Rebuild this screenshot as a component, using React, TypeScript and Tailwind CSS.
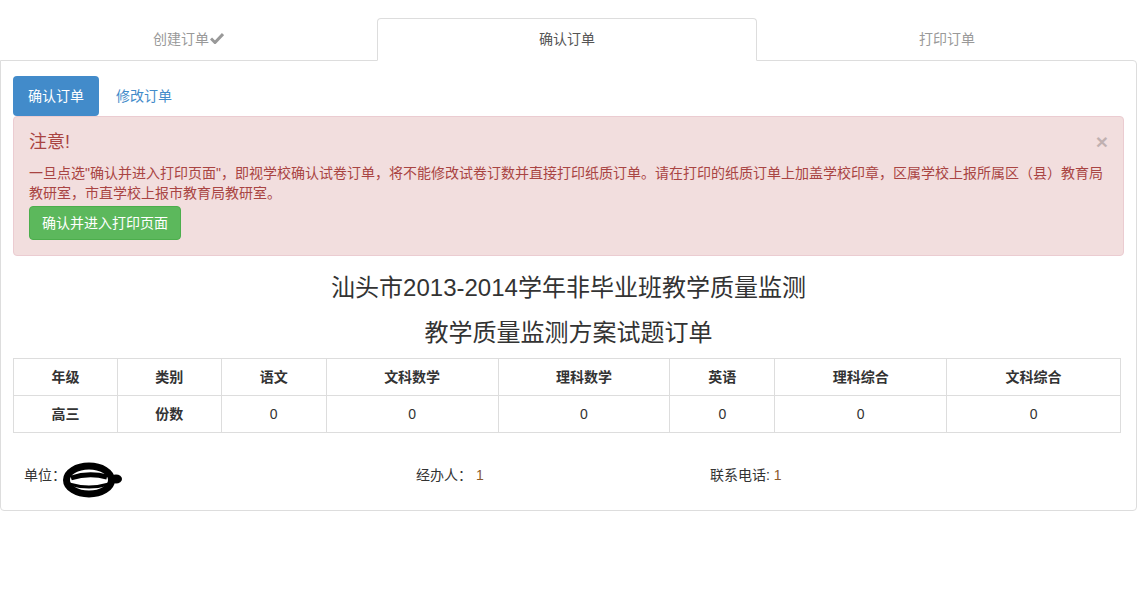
import React from 'react';

const font = '"Liberation Sans", "Noto Sans CJK SC", sans-serif';

const headers = ['年级', '类别', '语文', '文科数学', '理科数学', '英语', '理科综合', '文科综合'];
const widths = [104, 104, 105, 172, 172, 105, 172, 174];

const Check = () => (
  <svg width="14" height="12" viewBox="0 0 14 12" className="inline-block ml-[1px] -mt-[3px]">
    <path d="M1 6.5 L5 10.5 L13 2" fill="none" stroke="#999" strokeWidth="3" />
  </svg>
);

const Scribble = () => (
  <svg width="60" height="36" viewBox="0 0 60 36">
    <ellipse cx="26" cy="18" rx="22.5" ry="14" fill="none" stroke="#000" strokeWidth="7" />
    <path d="M8 16 Q26 10 44 15" fill="none" stroke="#000" strokeWidth="5" />
    <path d="M6 22 Q26 28 46 22" fill="none" stroke="#000" strokeWidth="3" />
    <ellipse cx="53" cy="17" rx="6" ry="4.5" fill="#000" />
  </svg>
);

export default function App() {
  return (
    <div className="w-[1146px] h-[614px] bg-white text-[14px] text-[#333]" style={{ fontFamily: font }}>
      <div className="w-[1137px] pt-[18px]">
        {/* Step tabs */}
        <div className="flex">
          <div className="w-[377px] h-[42px] flex items-center justify-center text-[#999]">
            创建订单<Check />
          </div>
          <div className="w-[380px] h-[43px] -mb-[1px] relative z-10 bg-white border border-[#ddd] border-b-white rounded-t-[4px] flex items-center justify-center text-[#555]">
            确认订单
          </div>
          <div className="flex-1 h-[42px] flex items-center justify-center text-[#999]">
            打印订单
          </div>
        </div>

        {/* Panel */}
        <div className="border border-[#ddd] rounded-[4px] rounded-tl-none h-[451px] px-[12px] pt-[15px]">
          <div className="flex items-center">
            <div className="w-[86px] h-[40px] bg-[#428bca] text-white rounded-[4px] flex items-center justify-center">确认订单</div>
            <div className="h-[40px] px-[17px] flex items-center text-[#428bca]">修改订单</div>
          </div>

          <div className="relative bg-[#f2dede] border border-[#ebccd1] rounded-[4px] text-[#a94442] h-[140px] px-[15px] pt-[12px]">
            <div className="text-[18px] leading-[26px]">注意!</div>
            <span className="absolute right-[15px] top-[12px] text-[21px] font-bold leading-[26px] text-black opacity-20">×</span>
            <p className="mt-[8px] leading-[20px] pr-[2px]">
              一旦点选"确认并进入打印页面"，即视学校确认试卷订单，将不能修改试卷订数并直接打印纸质订单。请在打印的纸质订单上加盖学校印章，区属学校上报所属区（县）教育局教研室，市直学校上报市教育局教研室。
            </p>
            <button className="mt-[3px] w-[152px] h-[34px] bg-[#5cb85c] border border-[#4cae4c] rounded-[4px] text-white">确认并进入打印页面</button>
          </div>

          <h3 className="text-center text-[24px] leading-[30px] mt-[17px]">汕头市2013-2014学年非毕业班教学质量监测</h3>
          <h3 className="text-center text-[24px] leading-[30px] mt-[15px]">教学质量监测方案试题订单</h3>

          <table className="mt-[10px] border-collapse w-[1108px]">
            <tbody>
              <tr>
                {headers.map((h, i) => (
                  <th key={h} style={{ width: widths[i] }} className="border border-[#ddd] h-[37px] text-center font-bold">{h}</th>
                ))}
              </tr>
              <tr>
                <td className="border border-[#ddd] h-[37px] text-center font-bold">高三</td>
                <td className="border border-[#ddd] h-[37px] text-center font-bold">份数</td>
                {headers.slice(2).map((h) => (
                  <td key={h} className="border border-[#ddd] h-[37px] text-center">0</td>
                ))}
              </tr>
            </tbody>
          </table>

          <div className="flex items-center mt-[24px] h-[36px]">
            <div className="w-[403px] pl-[11px] flex items-center">单位：<span className="-ml-[3px] mt-[10px]"><Scribble /></span></div>
            <div className="w-[294px]">经办人： <span className="text-[#8b5a2b]">1</span></div>
            <div>联系电话: <span className="text-[#8b5a2b]">1</span></div>
          </div>
        </div>
      </div>
    </div>
  );
}
